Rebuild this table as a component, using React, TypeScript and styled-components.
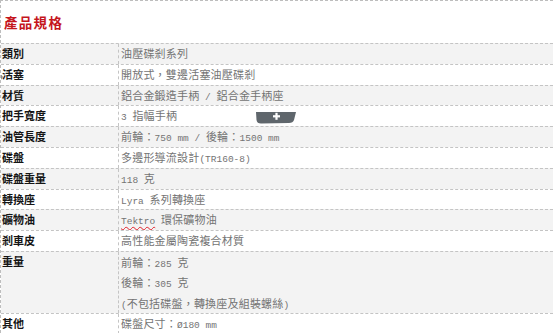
import React from "react";
import styled, { createGlobalStyle } from "styled-components";

const Global = createGlobalStyle`
  html, body { margin: 0; padding: 0; background: #fff; }
  body { font-family: "Noto Sans CJK TC", "Noto Sans CJK SC", sans-serif; }
`;

const Page = styled.div`
  position: relative;
  width: 553px;
  height: 333px;
  overflow: hidden;
  box-sizing: border-box;
  border-top: 1px dashed #bdbdbd;
  border-left: 1px dashed #bdbdbd;
`;

const Title = styled.h2`
  margin: 0;
  height: 42px;
  display: flex;
  align-items: center;
  padding-left: 3px;
  font-size: 13.5px;
  font-weight: 700;
  letter-spacing: 1.3px;
  color: #c5161d;
`;

const Table = styled.div`
  display: flex;
  flex-direction: column;
`;

const Row = styled.div<{ $alt?: boolean; $lines?: number }>`
  display: grid;
  grid-template-columns: 118px 1fr;
  box-sizing: border-box;
  height: ${(p) => ((p.$lines ?? 1) === 1 ? "20.8px" : `${(p.$lines ?? 1) * 20.4 + 1}px`)};
  overflow: hidden;
  flex: none;
  border-top: 1px dashed #c4c4c4;
  background: ${(p) => (p.$alt ? "#f3f3f3" : "#ffffff")};
`;

const Label = styled.div`
  border-right: 1px dashed #c4c4c4;
  padding-left: 1px;
  font-size: 11px;
  font-weight: 700;
  line-height: 19.8px;
  color: #151515;
  white-space: nowrap;
`;

const Value = styled.div`
  padding-left: 2px;
  font-size: 11px;
  letter-spacing: 0.2px;
  line-height: 19.8px;
  color: #747474;
  white-space: nowrap;
`;

const Line = styled.div`
  height: 20.4px;
  line-height: 20.4px;
`;

const Lat = styled.span<{ $spell?: boolean }>`
  font-family: "Liberation Mono", monospace;
  font-size: 9.5px;
  line-height: 1;
  letter-spacing: 0;
  text-decoration: ${(p) => (p.$spell ? "underline wavy #e0202a" : "none")};
  text-decoration-thickness: 1px;
  text-underline-offset: 2px;
`;

const Tab = styled.div`
  position: absolute;
  left: 255px;
  top: 104px;
  width: 40px;
  height: 12px;
`;

const EdgeMark = styled.div`
  position: absolute;
  left: -1px;
  top: 72px;
  width: 0;
  height: 0;
  border-top: 4px solid transparent;
  border-bottom: 4px solid transparent;
  border-left: 3px solid #8a8a8a;
`;

const rows: { label: string; value: React.ReactNode }[] = [
  { label: "類別", value: "油壓碟剎系列" },
  { label: "活塞", value: "開放式，雙邊活塞油壓碟剎" },
  { label: "材質", value: <>鋁合金鍛造手柄<Lat> / </Lat>鋁合金手柄座</> },
  { label: "把手寬度", value: <><Lat>3 </Lat>指幅手柄</> },
  { label: "油管長度", value: <>前輪：<Lat>750 mm / </Lat>後輪：<Lat>1500 mm</Lat></> },
  { label: "碟盤", value: <>多邊形導流設計<Lat>(TR160-8)</Lat></> },
  { label: "碟盤重量", value: <><Lat>118 </Lat>克</> },
  { label: "轉換座", value: <><Lat>Lyra </Lat>系列轉換座</> },
  { label: "礦物油", value: <><Lat $spell>Tektro</Lat><Lat> </Lat>環保礦物油</> },
  { label: "剎車皮", value: "高性能金屬陶瓷複合材質" },
];

export default function App() {
  return (
    <Page>
      <Global />
      <Title>產品規格</Title>
      <Table>
        {rows.map((r, i) => (
          <Row key={r.label} $alt={i % 2 === 0}>
            <Label>{r.label}</Label>
            <Value>{r.value}</Value>
          </Row>
        ))}
        <Row $alt $lines={3}>
          <Label>重量</Label>
          <Value>
            <Line>前輪：<Lat>285 </Lat>克</Line>
            <Line>後輪：<Lat>305 </Lat>克</Line>
            <Line><Lat>(</Lat>不包括碟盤，轉換座及組裝螺絲<Lat>)</Lat></Line>
          </Value>
        </Row>
        <Row>
          <Label>其他</Label>
          <Value>碟盤尺寸：<Lat>Ø180 mm</Lat></Value>
        </Row>
      </Table>
      <Tab>
        <svg width="40" height="12" viewBox="0 0 40 12">
          <path d="M0 0 H40 L38 8 Q37 11 33 11 L5 11.5 Q1 11.5 0.5 8 Z" fill="#5f666c" />
          <rect x="17" y="3.2" width="7" height="2.2" fill="#fff" />
          <rect x="19.4" y="0.8" width="2.2" height="7" fill="#fff" />
        </svg>
      </Tab>
      <EdgeMark />
    </Page>
  );
}
